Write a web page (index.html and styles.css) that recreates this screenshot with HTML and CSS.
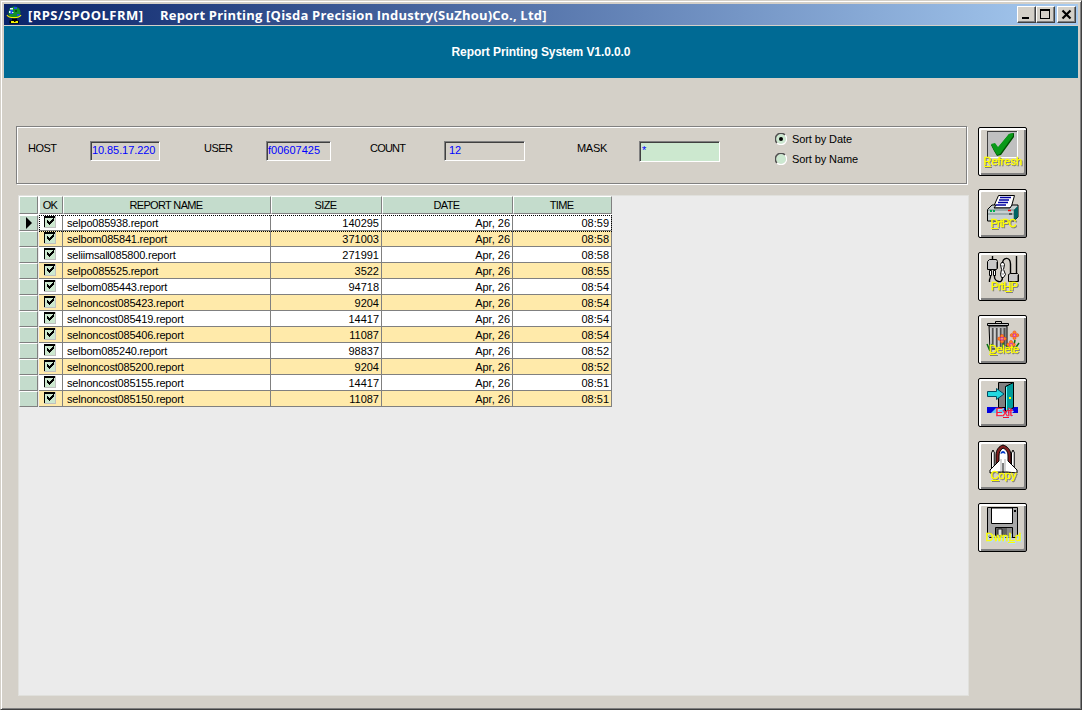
FILE: index.html
```html
<!DOCTYPE html>
<html lang="en">
<head>
<meta charset="utf-8">
<title>Report Printing</title>
<link rel="stylesheet" href="styles.css">
</head>
<body>
<div class="window">
  <header class="titlebar">
    <svg class="app-icon" width="16" height="18" viewBox="0 0 16 18">
      <circle cx="8.500" cy="6.500" r="6" fill="#12902c"/>
      <path d="M3.500 4h3.500v4H4zM8 1h3v2H8zM11 8h2.500v2H11z" fill="#1c50e0"/>
      <path d="M4 2h3v1.500H4zM3 5h1.500v2H3zM6 6h1.500v1H6z" fill="#e0f0ff"/>
      <path d="M9 4h2v2H9z" fill="#0a5018"/>
      <path d="M1 9c2 3.500 12 3.500 14 0" fill="none" stroke="#f0f000" stroke-width="1.200"/>
      <path d="M6 12.500h5v2H6zM3.500 14.500h9.500v3H3.500z" fill="#000"/>
      <path d="M5 15h7v2H5z" fill="#f0f000"/><path d="M8 15h1.500v1H8z" fill="#000"/>
    </svg>
    <span class="title-app">[RPS/SPOOLFRM]</span>
    <span class="title-text">Report Printing [Qisda Precision Industry(SuZhou)Co., Ltd]</span>
    <div class="win-buttons">
      <button class="win-btn"><svg width="17" height="15" shape-rendering="crispEdges"><path d="M4 10h7v2H4z"/></svg></button>
      <button class="win-btn"><svg width="17" height="15" shape-rendering="crispEdges"><path d="M3 2h10v10H3zM4 4v7h8V4z" fill-rule="evenodd"/></svg></button>
      <button class="win-btn close"><svg width="17" height="15"><path d="M4.500 3.500l8 8M12.500 3.500l-8 8" stroke="#000" stroke-width="2.200"/></svg></button>
    </div>
  </header>
  <div class="banner"><span>Report Printing System V1.0.0.0</span></div>
  <div class="workspace">
    <main class="main">
      <section class="filters">
        <label class="lbl lbl-host">HOST</label><div class="field host"><span>10.85.17.220</span></div>
        <label class="lbl lbl-user">USER</label><div class="field user"><span>f00607425</span></div>
        <label class="lbl lbl-count">COUNT</label><div class="field count"><span>12</span></div>
        <label class="lbl lbl-mask">MASK</label><div class="field mask"><span>*</span></div>
        <div class="sort">
          <div class="radio"><svg width="12" height="12" viewBox="0 0 12 12"><circle cx="6" cy="6" r="5" fill="#cce8d0"/><path d="M2 10A5.5 5.5 0 0 1 10 2" fill="none" stroke="#505050" stroke-width="1.5"/><path d="M10 2A5.5 5.5 0 0 1 2 10" fill="none" stroke="#fff" stroke-width="1.2"/><circle cx="6" cy="6" r="2"/></svg><span>Sort by Date</span></div>
          <div class="radio"><svg width="12" height="12" viewBox="0 0 12 12"><circle cx="6" cy="6" r="5" fill="#cce8d0"/><path d="M2 10A5.5 5.5 0 0 1 10 2" fill="none" stroke="#505050" stroke-width="1.5"/><path d="M10 2A5.5 5.5 0 0 1 2 10" fill="none" stroke="#fff" stroke-width="1.2"/></svg><span>Sort by Name</span></div>
        </div>
      </section>
      <section class="grid-panel">
        <div class="grid" id="grid">
          <div class="row head"><div class="sel"></div><div>OK</div><div>REPORT NAME</div><div>SIZE</div><div>DATE</div><div>TIME</div></div>
        </div>
      </section>
    </main>
    <aside class="tools">
      <button class="tool"><svg viewBox="0 0 49 49">
        <path d="M9 4h31v27H9z" fill="#fff"/><path d="M9 4h30v26H9z" fill="#404040"/><path d="M10 5h29v25H10z" fill="#c0c0c0"/>
        <path d="M13 18l4-1 3 4L31 7l5-1v4L23 28l-4 1-3-5z" fill="#005000"/><path d="M13 17l4-1 3 4L31 7l4-1v3L22 27l-3 1-3-5z" fill="#0a9a18"/>
        <g class="caption"><text class="cap" x="5.5" y="38" textLength="38.5">Refresh</text><path class="u" d="M6 39.5h7"/></g>
      </svg></button>
      <button class="tool"><svg viewBox="0 0 49 49">
        <path d="M15 19L20.5 6.500h16L33 19z" fill="#fff" stroke="#000"/>
        <path d="M22 8.500h11M21 11h10M20 13.500h10M18 16h10" stroke="#0000a0" stroke-width="1.500"/>
        <path d="M9.500 20.500L14 16h4l-2 3h16l2-3h6v12l-4 4H9.500z" fill="#c8d0d0" stroke="#000"/>
        <path d="M10 21h26l4-4M10 25h26M36 21v10" stroke="#708888" fill="none"/><path d="M36 21l4-4v11l-4 4z" fill="#006464"/>
        <path d="M12 22h2M15 22h2" stroke="#00b050" stroke-width="2"/><path d="M30 21.500h3" stroke="#f00" stroke-width="1.500"/><path d="M31 25h3" stroke="#000"/>
        <g class="caption"><text class="cap" x="12.500" y="38" textLength="26">PrtPC</text><path class="u" d="M13 39.500h7"/></g>
      </svg></button>
      <button class="tool"><svg viewBox="0 0 49 49" fill="none" stroke="#000">
        <path d="M14.500 4v5M38.500 4v17M12.500 17v8l-1 3v2M16.500 17v8c0 4 8 8 8 0M24.500 12c0-7 8-8 8 0v10" stroke-width="1.400"/>
        <path d="M9.500 9.500l2-2h7l1 2v7l-1 1h-9z" fill="#c8c8c8"/><path d="M18.500 10v7" stroke="#707070"/>
        <path d="M11.500 18.500h2v5h-2zM15.500 18.500h2v5h-2z" fill="#fff"/>
        <path d="M22.500 12.500l1-2h2l1 2-1 5 2 5-2 3h-2l-1-3 1-5z" fill="#fff"/><path d="M23 14h3M24 18h2M23 22h3" stroke="#888"/>
        <path d="M30.500 22.500l2-1h7l1 1v7h-10z" fill="#c8c8c8"/><path d="M39.500 23v6" stroke="#707070"/>
        <g class="caption"><text class="cap" x="13" y="38" textLength="27">PrtHP</text><path class="u" d="M27 39.500h7"/></g>
      </svg></button>
      <button class="tool"><svg viewBox="0 0 49 49">
        <path d="M11 11h18v23H12z" fill="#b0b0b0" stroke="#000"/><path d="M14.500 13v18M18.500 13v19M22.500 13v19M26.500 13v18" stroke="#505050" stroke-width="2"/><path d="M13 13v19M17 13v20M21 13v20" stroke="#eee"/>
        <path d="M9.500 8.500h21v2h-21z" fill="#c8c8c8" stroke="#000"/><path d="M17.500 8V6.500h6V8" fill="none" stroke="#000"/>
        <path d="M9 29l3 7M14 29l-3 6M25 27v8M37 25l-2 10M41 28l-5 7M28 30l5 5" stroke="#087010" stroke-width="1.500"/>
        <g id="flower"><g fill="#ff8a20" stroke="#f03010" stroke-width=".5"><circle cx="24" cy="21" r="1.600"/><circle cx="24" cy="26.400" r="1.600"/><circle cx="21.300" cy="23.700" r="1.600"/><circle cx="26.700" cy="23.700" r="1.600"/></g><circle cx="24" cy="23.700" r="1.700" fill="#d020e0"/><circle cx="24" cy="23.700" r=".8" fill="#ff0"/></g>
        <use href="#flower" x="12.500" y="-3.500"/><use href="#flower" x="9" y="6"/>
        <g class="caption"><text class="cap" x="11" y="38" textLength="30">Delete</text><path class="u" d="M11 39.500h8"/></g>
      </svg></button>
      <button class="tool"><svg viewBox="0 0 49 49">
        <path d="M9 29h31v6H9z" fill="#0000e0"/><path d="M20.500 4.500h15v25h-15z" fill="#808080" stroke="#000"/>
        <path d="M27.500 8.500l8-4v25l-8 5z" fill="#009c9c" stroke="#000"/><path d="M28.500 9v24" stroke="#70ffff"/><path d="M31 19h2v2h-2z" fill="#ff0"/>
        <path d="M9.500 13.500h9v-3l7.500 5.500-7.500 5.500v-3h-9z" fill="#20d8e0" stroke="#004c60"/>
        <path d="M13 35l5-5h8v5z" fill="#60c8f0"/>
        <g class="caption light"><text class="cap exit" x="17.500" y="38" textLength="17">Exit</text><path d="M25 39.500h6" stroke="#f01030"/></g>
      </svg></button>
      <button class="tool"><svg viewBox="0 0 49 49">
        <path d="M18 31V14c0-5 3-9 7-10 4 1 8 5 8 10v17z" fill="#802020" stroke="#000"/>
        <path d="M13.500 31V12l1.500-3 1.500 3v19zM33.500 31V12l1.500-3 1.500 3v19z" fill="#fff" stroke="#000"/><path d="M16 12v16M36 12v16" stroke="#777"/>
        <path d="M25 7c-3 2-4 5-4 8v5l-9 9v3l9-1h8l10 1v-3l-9-9v-5c0-3-1-6-5-8z" fill="#fff" stroke="#000"/>
        <path d="M22.500 13c0-4 5-4 5 0l-2.500-1z" fill="#0038c8"/><path d="M23 18v12M27 18v12" stroke="#aaa"/><path d="M25 22v9" stroke="#000"/>
        <g class="caption"><text class="cap" x="12.500" y="38" textLength="26">Copy</text><path class="u" d="M13 39.500h8"/></g>
      </svg></button>
      <button class="tool"><svg viewBox="0 0 49 49">
        <path d="M9.500 4.500h30v30h-28l-2-2z" fill="#a8a8a8" stroke="#000"/><path d="M13.500 5h21v15.500h-21z" fill="#fff" stroke="#000"/><path d="M36 7h2v2h-2z" fill="#000"/>
        <path d="M17.500 24.500h17v10h-17z" fill="#606060" stroke="#000"/><path d="M20 26h4v7h-4z" fill="#ddd" stroke="#222"/><path d="M29 25h5v9h-5z" fill="#888"/>
        <g class="caption light"><text class="cap" x="7.500" y="38" textLength="35.500">DwnLd</text><path class="u" d="M30 39.500h7"/></g>
      </svg></button>
    </aside>
  </div>
</div>
<script src="grid.js"></script>
</body>
</html>
```

FILE: styles.css
```css
* { box-sizing: border-box; }
body { margin: 0; font: 11px/13px "Liberation Sans", Arial, sans-serif; color: #000; overflow: hidden; }
button { padding: 0; font: inherit; }
svg { display: block; }
.window { width: 1082px; height: 710px; background: #d4d0c8; border: 1px solid; border-color: #d4d0c8 #404040 #404040 #d4d0c8; box-shadow: inset 1px 1px #fff, inset -1px -1px #808080; padding: 3px; }
.titlebar { height: 21px; display: flex; align-items: center; background: linear-gradient(90deg, #0a246a, #a6caf0); color: #fff; font: bold 13px/20px "Open Sans", "Noto Sans", sans-serif; padding-left: 2px; white-space: nowrap; }
.app-icon { margin-right: 6px; }
.title-app { width: 132px; letter-spacing: .44px; }
.title-text { flex: 1; letter-spacing: .2px; }
.win-buttons { display: flex; padding-right: 2px; }
.win-btn { width: 19px; height: 17px; border: 1px solid; border-color: #fff #404040 #404040 #fff; box-shadow: inset -1px -1px #808080; background: #d4d0c8; border-radius: 0; }
.win-btn.close { margin-left: 2px; }
.banner { margin-top: 1px; height: 52px; background: #006a94; color: #fff; font: bold 12px/52px "Liberation Sans", Arial, sans-serif; letter-spacing: -.08px; text-align: center; }
.workspace { display: flex; padding: 48px 0 0 12px; }
.main { width: 953px; }
.filters { width: 951px; height: 58px; border: 1px solid #808080; box-shadow: inset 1px 1px #fff, 1px 1px #fff; display: flex; align-items: flex-start; padding: 14px 0 0 11px; }
.lbl { padding-top: 1px; letter-spacing: -.5px; }
.lbl-host { width: 62px; }
.lbl-user { width: 62px; margin-left: 44px; }
.lbl-count { width: 74px; margin-left: 39px; letter-spacing: -.8px; }
.lbl-mask { width: 62px; margin-left: 52px; letter-spacing: -.3px; }
.field { height: 20px; border: 1px solid; border-color: #808080 #fff #fff #808080; box-shadow: inset 1px 1px #404040; color: #00f; line-height: 16px; padding-left: 2px; white-space: nowrap; }
.host { width: 70px; padding-left: 1px; letter-spacing: -.08px; }
.user { width: 65px; padding-left: 1px; }
.count { width: 81px; padding-left: 4px; }
.mask { width: 81px; height: 21px; background: #cce8cf; }
.sort { margin: -12px 0 0 55px; letter-spacing: -.1px; }
.radio { display: flex; align-items: center; height: 20px; gap: 5px; }
.grid-panel { margin: 11px 0 0 2px; width: 951px; height: 501px; background: #ebebeb; border: 1px solid #e0e0dc; }
.grid { width: 593px; }
.row { display: grid; grid-template-columns: 20px 24px 208px 111px 131px 99px; height: 16px; }
.row > div { border-right: 1px solid #808080; border-bottom: 1px solid #808080; background: #fff; line-height: 15px; white-space: nowrap; padding: 1px 2px 0 3px; text-align: right; height: 16px; }
.row > .name { text-align: left; padding-left: 4px; letter-spacing: -.2px; }
.row > .check { padding: 0 0 0 5px; }
.row.even > div { background: #ffeaaa; }
.row > .sel, .row.even > .sel { background: #c4dccc; border: 1px solid; border-color: #fff #808080 #808080 #fff; margin-right: 1px; padding: 0 0 0 5px; }
.row.head { height: 19px; background: #fff; }
.row.head > div { height: 18px; background: #c4dccc; text-align: center; border: 1px solid; border-color: #fff #808080 #808080 #fff; line-height: 17px; padding: 0 2px 0 0; letter-spacing: -.65px; }
.row.current { position: relative; }
.row.current::after { content: ""; position: absolute; left: 20px; right: 0; top: 0; height: 15px; border: 1px dotted #000; }
.tools { display: flex; flex-direction: column; gap: 14px; padding: 1px 0 0 9px; }
.tool { width: 49px; height: 49px; border: 1px solid #000; border-radius: 2px; background: #d4d0c8; box-shadow: inset 2px 2px #fff, inset -2px -2px #808080; }
.tool:nth-child(2), .tool:last-child { margin-top: -1px; }
.tool svg { width: 49px; height: 49px; margin: -1px; }
.caption { filter: drop-shadow(1px 1px 0 #80807c); }
.caption.light { filter: drop-shadow(1px 1px 0 #b0dcf8); }
.cap { font: 11px "Liberation Sans", Arial, sans-serif; fill: #ffff00; stroke: #ffff00; stroke-width: .35px; }
.cap.exit { fill: #ff1838; stroke: #ff1838; }
.u { stroke: #ffff00; }
```

FILE: grid.js
```js
const rows = [
  ["selpo085938.report", "140295", "08:59"],
  ["selbom085841.report", "371003", "08:58"],
  ["seliimsall085800.report", "271991", "08:58"],
  ["selpo085525.report", "3522", "08:55"],
  ["selbom085443.report", "94718", "08:54"],
  ["selnoncost085423.report", "9204", "08:54"],
  ["selnoncost085419.report", "14417", "08:54"],
  ["selnoncost085406.report", "11087", "08:54"],
  ["selbom085240.report", "98837", "08:52"],
  ["selnoncost085200.report", "9204", "08:52"],
  ["selnoncost085155.report", "14417", "08:51"],
  ["selnoncost085150.report", "11087", "08:51"]
];
const check = '<svg width="13" height="14" viewBox="0 0 13 14" shape-rendering="crispEdges"><path d="M0 1h12v12H0z" fill="#c0c0c0"/><path d="M0 1h11v11H0z" fill="#000"/><path d="M1 3h10v9H1z" fill="#cce8cf"/><path d="M0 1h1v11H0z" fill="#000"/><path d="M2 5h1v1h1v1h1V6h1V5h1V4h1V3h1v3H8v1H7v1H6v1H5v1H4V9H3V8H2z" transform="translate(1 0)"/></svg>';
const arrow = '<svg width="8" height="14"><path d="M1 1v12l6-6z"/></svg>';
document.getElementById("grid").insertAdjacentHTML("beforeend", rows.map(([name, size, time], i) =>
  `<div class="row${i % 2 ? " even" : ""}${i ? "" : " current"}"><div class="sel">${i ? "" : arrow}</div><div class="check">${check}</div><div class="name">${name}</div><div>${size}</div><div>Apr, 26</div><div>${time}</div></div>`).join(""));
```
